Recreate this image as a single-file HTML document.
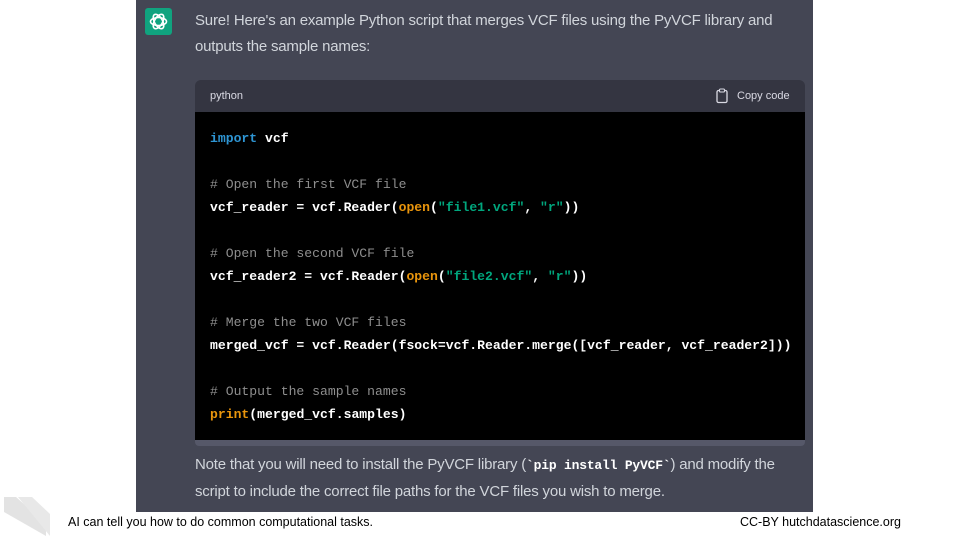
<!DOCTYPE html>
<html><head><style>
*{margin:0;padding:0;box-sizing:border-box}
body{width:960px;height:540px;background:#fff;position:relative;overflow:hidden;font-family:"Liberation Sans",sans-serif}
#shot{position:absolute;left:136px;top:0;width:677px;height:512px;background:#444654}
.avatar{position:absolute;left:9px;top:8px;width:27px;height:27px;background:#10a37f;border-radius:3px}
.p{position:absolute;left:59px;color:#d1d5db;font-size:15px;letter-spacing:-0.2px;white-space:nowrap}
.head{position:absolute;left:59px;top:80px;width:610px;height:32px;background:#343541;border-radius:6px 6px 0 0;color:#d9d9e3;font-size:11px}
.code{position:absolute;left:59px;top:112px;width:610px;height:328px;background:#000}
.strip{position:absolute;left:59px;top:440px;width:610px;height:6px;background:#565869;border-radius:0 0 4px 4px}
pre{position:absolute;left:15px;top:15px;font-family:"Liberation Mono",monospace;font-size:13.1px;line-height:23px;color:#fff;font-weight:bold}
.k{color:#2e95d3}.c{color:#8e8e8e;font-weight:normal}.o{color:#e9950c}.s{color:#00a67d}
code{font-family:"Liberation Mono",monospace;font-weight:bold;color:#fff;font-size:13px}
.foot{position:absolute;top:515px;font-size:12.5px;color:#000}
</style></head><body>
<div id="shot">
<div class="avatar"><svg width="27" height="27" viewBox="0 0 27 27"><g fill="none" stroke="#fff" stroke-width="1.6"><ellipse cx="13.5" cy="13.5" rx="8" ry="4" transform="rotate(60 13.5 13.5)"/><ellipse cx="13.5" cy="13.5" rx="8" ry="4" transform="rotate(-60 13.5 13.5)"/><ellipse cx="13.5" cy="13.5" rx="8" ry="4"/></g></svg></div>
<div class="p" style="top:12px">Sure! Here's an example Python script that merges VCF files using the PyVCF library and</div>
<div class="p" style="top:38px">outputs the sample names:</div>
<div class="head"><span style="position:absolute;left:15px;top:10px">python</span>
<svg style="position:absolute;left:520px;top:8px" width="14" height="16" viewBox="0 0 14 16"><rect x="2" y="2.5" width="10" height="12" rx="1.5" fill="none" stroke="#d9d9e3" stroke-width="1.3"/><rect x="4.5" y="1" width="5" height="3" rx="1" fill="#343541" stroke="#d9d9e3" stroke-width="1.1"/></svg>
<span style="position:absolute;left:542px;top:10px">Copy code</span></div>
<div class="code"><pre><span class="k">import</span> vcf

<span class="c"># Open the first VCF file</span>
vcf_reader = vcf.Reader(<span class="o">open</span>(<span class="s">"file1.vcf"</span>, <span class="s">"r"</span>))

<span class="c"># Open the second VCF file</span>
vcf_reader2 = vcf.Reader(<span class="o">open</span>(<span class="s">"file2.vcf"</span>, <span class="s">"r"</span>))

<span class="c"># Merge the two VCF files</span>
merged_vcf = vcf.Reader(fsock=vcf.Reader.merge([vcf_reader, vcf_reader2]))

<span class="c"># Output the sample names</span>
<span class="o">print</span>(merged_vcf.samples)</pre></div>
<div class="strip"></div>
<div class="p" style="top:456px">Note that you will need to install the PyVCF library (<code>`pip install PyVCF`</code>) and modify the</div>
<div class="p" style="top:483px">script to include the correct file paths for the VCF files you wish to merge.</div>
</div>
<svg style="position:absolute;left:0;top:494px" width="55" height="46"><polygon points="4,3 16,3 46,30 46,42 4,18" fill="#e3e3e3"/><polygon points="18,3 32,3 50,20 50,42" fill="#e8e8e8"/></svg>
<div class="foot" style="left:68px">AI can tell you how to do common computational tasks.</div>
<div class="foot" style="left:740px">CC-BY hutchdatascience.org</div>
</body></html>
